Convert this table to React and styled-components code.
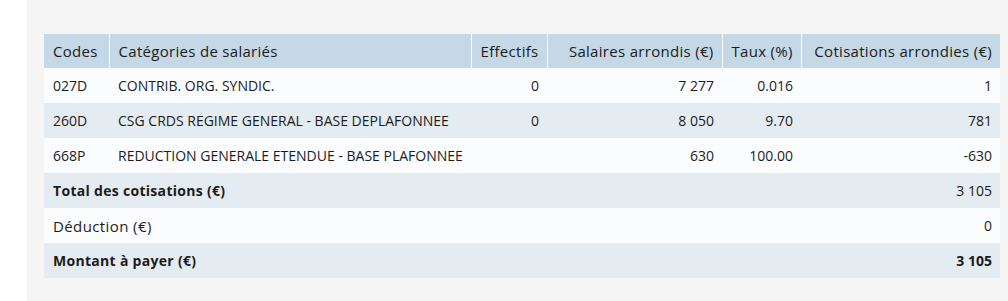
import React from 'react'
import styled, { createGlobalStyle } from 'styled-components'

const GlobalStyle = createGlobalStyle`
  html, body {
    margin: 0;
    padding: 0;
    background: #ffffff;
    font-family: "Open Sans", "Liberation Sans", sans-serif;
  }
`

const Page = styled.div`
  padding-left: 27px;
  height: 301px;
  overflow: hidden;
`

const Panel = styled.div`
  background: #f5f5f5;
  height: 100%;
  padding: 34px 8px 0 17px;
  box-sizing: border-box;
`

const Table = styled.table`
  width: 956px;
  border-collapse: collapse;
  table-layout: fixed;
  color: #1c1c1c;
  font-size: 14px;
`

const HeadCell = styled.th`
  background: #c5d8e5;
  font-weight: 400;
  font-size: 15px;
  letter-spacing: 0.3px;
  height: 34px;
  padding: 0 8px 0 9px;
  text-align: ${p => (p.$right ? 'right' : 'left')};
  border-left: 1px solid #ffffff;
  white-space: nowrap;
  &:first-child {
    border-left: none;
  }
`

const Row = styled.tr`
  background: ${p => (p.$shade ? '#e4ebf1' : '#fbfcfe')};
`

const Cell = styled.td`
  height: 35px;
  padding: 0 8px 0 9px;
  text-align: ${p => (p.$right ? 'right' : 'left')};
  font-weight: ${p => (p.$bold ? 700 : 400)};
  white-space: nowrap;
`

const LabelCell = styled(Cell)`
  font-size: ${p => (p.$bold ? '14px' : '15px')};
  letter-spacing: ${p => (p.$bold ? '0.3px' : '0.4px')};
`

const lines = [
  { code: '027D', label: 'CONTRIB. ORG. SYNDIC.', eff: '0', sal: '7 277', taux: '0.016', cot: '1' },
  { code: '260D', label: 'CSG CRDS REGIME GENERAL - BASE DEPLAFONNEE', eff: '0', sal: '8 050', taux: '9.70', cot: '781' },
  { code: '668P', label: 'REDUCTION GENERALE ETENDUE - BASE PLAFONNEE', eff: '', sal: '630', taux: '100.00', cot: '-630' },
]

const totals = [
  { label: 'Total des cotisations (€)', value: '3 105', boldLabel: true },
  { label: 'Déduction (€)', value: '0' },
  { label: 'Montant à payer (€)', value: '3 105', boldLabel: true, boldValue: true },
]

const App = () => (
  <>
    <GlobalStyle />
    <Page>
      <Panel>
        <Table>
          <colgroup>
            <col style={{ width: 65 }} />
            <col style={{ width: 362 }} />
            <col style={{ width: 76 }} />
            <col style={{ width: 175 }} />
            <col style={{ width: 79 }} />
            <col style={{ width: 199 }} />
          </colgroup>
          <thead>
            <tr>
              <HeadCell>Codes</HeadCell>
              <HeadCell>Catégories de salariés</HeadCell>
              <HeadCell $right>Effectifs</HeadCell>
              <HeadCell $right>Salaires arrondis (€)</HeadCell>
              <HeadCell $right>Taux (%)</HeadCell>
              <HeadCell $right>Cotisations arrondies (€)</HeadCell>
            </tr>
          </thead>
          <tbody>
            {lines.map((l, i) => (
              <Row key={l.code} $shade={i % 2 === 1}>
                <Cell>{l.code}</Cell>
                <Cell>{l.label}</Cell>
                <Cell $right>{l.eff}</Cell>
                <Cell $right>{l.sal}</Cell>
                <Cell $right>{l.taux}</Cell>
                <Cell $right>{l.cot}</Cell>
              </Row>
            ))}
            {totals.map((t, i) => (
              <Row key={t.label} $shade={(lines.length + i) % 2 === 1}>
                <LabelCell colSpan={5} $bold={t.boldLabel}>{t.label}</LabelCell>
                <Cell $right $bold={t.boldValue}>{t.value}</Cell>
              </Row>
            ))}
          </tbody>
        </Table>
      </Panel>
    </Page>
  </>
)

export default App
